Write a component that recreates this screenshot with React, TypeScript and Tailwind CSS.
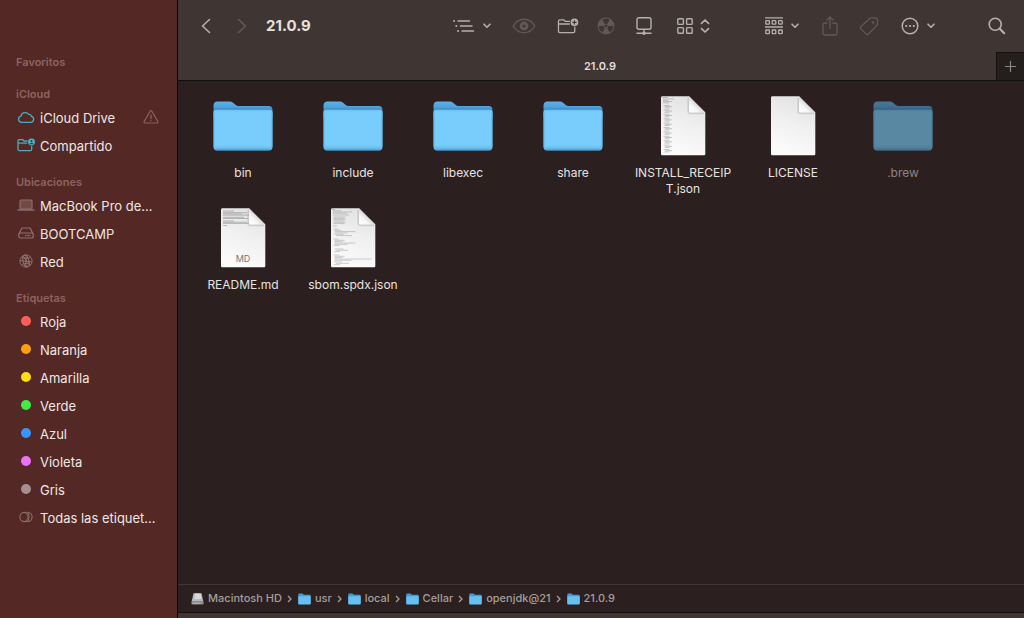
import { useId } from "react";
import type { ReactNode } from "react";

interface Place {
  label: string;
  icon: ReactNode;
  warning?: boolean;
}

const places: { title: string; items: Place[] }[] = [
  {
    title: "Favoritos",
    items: [],
  },
  {
    title: "iCloud",
    items: [
      { label: "iCloud Drive", icon: <CloudIcon />, warning: true },
      { label: "Compartido", icon: <SharedIcon /> },
    ],
  },
  {
    title: "Ubicaciones",
    items: [
      { label: "MacBook Pro de…", icon: <LaptopIcon /> },
      { label: "BOOTCAMP", icon: <DriveIcon /> },
      { label: "Red", icon: <NetworkIcon /> },
    ],
  },
  {
    title: "Etiquetas",
    items: [
      { label: "Roja", icon: <Dot className="bg-[#ff5f57]" /> },
      { label: "Naranja", icon: <Dot className="bg-[#ff9f0f]" /> },
      { label: "Amarilla", icon: <Dot className="bg-[#ffdf14]" /> },
      { label: "Verde", icon: <Dot className="bg-[#41ec45]" /> },
      { label: "Azul", icon: <Dot className="bg-[#3795ff]" /> },
      { label: "Violeta", icon: <Dot className="bg-[#ee70ff]" /> },
      { label: "Gris", icon: <Dot className="bg-[#a68f92]" /> },
      { label: "Todas las etiquet…", icon: <AllTagsIcon /> },
    ],
  },
];

type FileKind = "folder" | "receipt" | "plain" | "markdown" | "json";

const files: { name: string; kind: FileKind; hidden?: boolean }[] = [
  { name: "bin", kind: "folder" },
  { name: "include", kind: "folder" },
  { name: "libexec", kind: "folder" },
  { name: "share", kind: "folder" },
  { name: "INSTALL_RECEIPT.json", kind: "receipt" },
  { name: "LICENSE", kind: "plain" },
  { name: ".brew", kind: "folder", hidden: true },
  { name: "README.md", kind: "markdown" },
  { name: "sbom.spdx.json", kind: "json" },
];

const path = ["Macintosh HD", "usr", "local", "Cellar", "openjdk@21", "21.0.9"];

/* Sidebar icons */

function Dot({ className }: { className: string }) {
  return <span className={`block size-[10px] rounded-full ${className}`} />;
}

function CloudIcon() {
  return (
    <svg width="18" height="14" viewBox="0 0 18 14" fill="none" stroke="#4fa9bf" strokeWidth="1.3">
      <path d="M4.4 12.3h9.2a3 3 0 0 0 .8-5.9 2 2 0 0 0-2.7-1.9A4.2 4.2 0 0 0 4 6.2a3.1 3.1 0 0 0 .4 6.1Z" strokeLinejoin="round" />
    </svg>
  );
}

function SharedIcon() {
  return (
    <svg width="18" height="14" viewBox="0 0 18 14" fill="none" stroke="#4fa9bf" strokeWidth="1.3">
      <path d="M10.5 3H7L5.8 1.7H2.2c-.8 0-1.2.4-1.2 1.2v8.3c0 .9.5 1.4 1.4 1.4h10.9c.9 0 1.4-.5 1.4-1.4V8M1 5.2h9.2" />
      <circle cx="14.5" cy="4" r="3.4" fill="#43b9d5" stroke="none" />
      <circle cx="14.5" cy="3" r="1.1" fill="#532825" stroke="none" />
      <path d="M12.6 6.2c.3-2 3.5-2 3.8 0Z" fill="#532825" stroke="none" />
    </svg>
  );
}

function LaptopIcon() {
  return (
    <svg width="18" height="14" viewBox="0 0 18 14" fill="none" stroke="#8f7170" strokeWidth="1.1">
      <rect x="3" y="2" width="12" height="9" rx="1" fill="#714947" />
      <path d="M.5 12h17" strokeWidth="1.4" />
    </svg>
  );
}

function DriveIcon() {
  return (
    <svg width="18" height="14" viewBox="0 0 18 14" fill="none" stroke="#8f7170" strokeWidth="1.2">
      <path d="M2 8 4.3 3c.3-.7.8-1 1.5-1h6.400c.7 0 1.2.3 1.5 1L16 8" />
      <rect x="1.7" y="7" width="14.6" height="5" rx="2" />
      <path d="M8 9.500h6" strokeWidth="1.5" strokeDasharray="1 .5" />
    </svg>
  );
}

function NetworkIcon() {
  return (
    <svg width="14" height="14" viewBox="0 0 14 14" fill="none" stroke="#8f7170" strokeWidth="1">
      <circle cx="7" cy="7" r="6.1" />
      <ellipse cx="7" cy="7" rx="2.9" ry="6" transform="rotate(-15 7 7)" />
      <path d="M1 6.5 12.5 8M2.6 3.2C5 5 9 5 11.8 3.2M2.5 11c2.5-2 6.5-2 9 0M7 1v12M4 2l7 9" />
    </svg>
  );
}

function AllTagsIcon() {
  return (
    <svg width="14" height="12" viewBox="0 0 14 12" fill="none" stroke="#8f7170" strokeWidth="1.1">
      <circle cx="5.5" cy="6" r="4.6" />
      <path d="M8.5 1.4a4.6 4.6 0 0 1 0 9.2" />
      <path d="M6.9 2.2a4.6 4.6 0 0 1 0 7.6" strokeWidth=".8" />
    </svg>
  );
}

function WarningIcon() {
  return (
    <svg width="16" height="14" viewBox="0 0 16 14" fill="none" stroke="#88605d" strokeWidth="1.2" strokeLinecap="round">
      <path d="M7.1 1.2c.4-.7 1.4-.7 1.8 0l5.9 10.2c.4.7-.1 1.6-.9 1.6H2.1c-.8 0-1.3-.9-.9-1.6Z" />
      <path d="M8 5v3.600M8 10.500v.2" strokeWidth="1.3" />
    </svg>
  );
}

/* Toolbar icons */

function ChevronDown() {
  return (
    <svg width="8" height="6" viewBox="0 0 8 6" fill="none" stroke="currentColor" strokeWidth="1.6" strokeLinecap="round" strokeLinejoin="round">
      <path d="m1 1.2 3 3 3-3" />
    </svg>
  );
}

function ListIcon() {
  return (
    <svg width="22" height="16" viewBox="0 0 22 16" fill="none" stroke="currentColor" strokeWidth="1.4" strokeLinecap="round">
      <path d="M5 3h11.5M7.5 8H19M9 13h11.5" />
      <path d="M1 3h.2M3.2 8h.2M5 13h.2" strokeWidth="1.8" />
    </svg>
  );
}

function EyeIcon() {
  return (
    <svg width="24" height="16" viewBox="0 0 24 16" fill="none" stroke="currentColor" strokeWidth="1.4">
      <path d="M1.2 8C3.5 4 7.5 1.3 12 1.3S20.500 4 22.800 8c-2.300 4-6.300 6.700-10.800 6.700S3.500 12 1.200 8Z" />
      <circle cx="12" cy="8" r="3" strokeWidth="2.8" />
    </svg>
  );
}

function NewFolderIcon() {
  return (
    <svg width="24" height="18" viewBox="0 0 24 18" fill="none" stroke="currentColor" strokeWidth="1.4">
      <path d="M14 4H9L7.5 2.3H3c-.9 0-1.4.5-1.4 1.4v11c0 1 .6 1.6 1.6 1.6h14.600c1 0 1.600-.6 1.600-1.600v-5M1.600 6.800H14" />
      <circle cx="19" cy="5" r="4.200" fill="currentColor" stroke="none" />
      <path d="M19 2.700v4.600M16.700 5h4.600" stroke="#3f3634" strokeWidth="1.2" />
    </svg>
  );
}

function BurnIcon() {
  return (
    <svg width="18" height="18" viewBox="0 0 18 18">
      <circle cx="9" cy="9" r="8.5" fill="currentColor" />
      <g fill="#3f3634">
        {[60, 180, 300].map((angle) => (
          <path
            key={angle}
            d="M7.8 7 5.3 2.7a7.3 7.3 0 0 1 7.4 0L10.200 7a2.300 2.300 0 0 0-2.400 0Z"
            transform={`rotate(${angle + 60} 9 9)`}
          />
        ))}
        <circle cx="9" cy="9" r="1.4" />
      </g>
    </svg>
  );
}

function ServerIcon() {
  return (
    <svg width="18" height="20" viewBox="0 0 18 20" fill="none" stroke="currentColor" strokeWidth="1.4">
      <rect x="2" y="1.7" width="14" height="11.5" rx="2" />
      <path d="M9 13.2V17M1.5 17.2h15" />
      <circle cx="9" cy="17.2" r="1.8" fill="currentColor" stroke="none" />
    </svg>
  );
}

function GridIcon() {
  return (
    <svg width="16" height="16" viewBox="0 0 16 16" fill="none" stroke="currentColor" strokeWidth="1.4">
      <rect x=".8" y=".8" width="5.6" height="5.6" rx=".8" />
      <rect x="9.6" y=".8" width="5.6" height="5.6" rx=".8" />
      <rect x=".8" y="9.6" width="5.6" height="5.6" rx=".8" />
      <rect x="9.6" y="9.6" width="5.6" height="5.6" rx=".8" />
    </svg>
  );
}

function UpDownIcon() {
  return (
    <svg width="10" height="14" viewBox="0 0 10 14" fill="none" stroke="currentColor" strokeWidth="1.7" strokeLinecap="round" strokeLinejoin="round">
      <path d="M1.500 4.300 5 1l3.500 3.300M1.500 9.700 5 13l3.500-3.300" />
    </svg>
  );
}

function GroupIcon() {
  return (
    <svg width="18" height="18" viewBox="0 0 18 18" fill="none" stroke="currentColor" strokeWidth="1.3">
      <path d="M0 .8h18M0 10h18" />
      <rect x=".8" y="3.6" width="3.6" height="3.6" rx=".6" />
      <rect x="7.2" y="3.6" width="3.6" height="3.6" rx=".6" />
      <rect x="13.6" y="3.6" width="3.6" height="3.6" rx=".6" />
      <rect x=".8" y="13" width="3.6" height="3.6" rx=".6" />
      <rect x="7.2" y="13" width="3.6" height="3.6" rx=".6" />
      <rect x="13.6" y="13" width="3.6" height="3.6" rx=".6" />
    </svg>
  );
}

function ShareIcon() {
  return (
    <svg width="16" height="20" viewBox="0 0 16 20" fill="none" stroke="currentColor" strokeWidth="1.3" strokeLinecap="round" strokeLinejoin="round">
      <path d="M5 7H2.8C1.6 7 1 7.600 1 8.800v8.400c0 1.200.6 1.800 1.800 1.800h10.400c1.200 0 1.800-.6 1.800-1.800V8.800C15 7.600 14.400 7 13.200 7H11M8 12.500V1.200M5 4l3-3 3 3" />
    </svg>
  );
}

function TagIcon() {
  return (
    <svg width="20" height="20" viewBox="0 0 20 20" fill="none" stroke="currentColor" strokeWidth="1.3" strokeLinejoin="round">
      <path d="M10.8 2.5c.5-.5 1-.7 1.7-.7h3.700c1.500 0 2.300.8 2.300 2.300v3.700c0 .7-.2 1.200-.7 1.700l-8.300 8.400c-.8.8-1.700.8-2.500 0L2 13.100c-.8-.8-.8-1.700 0-2.500Z" />
      <circle cx="14" cy="6.500" r="1.3" fill="currentColor" stroke="none" />
    </svg>
  );
}

function MoreIcon() {
  return (
    <svg width="18" height="18" viewBox="0 0 18 18" fill="none" stroke="currentColor" strokeWidth="1.5" strokeLinecap="round">
      <circle cx="9" cy="9" r="7.8" />
      <path d="M5.2 9h.1M9 9h.1M12.8 9h.1" strokeWidth="2.2" />
    </svg>
  );
}

function SearchIcon() {
  return (
    <svg width="18" height="18" viewBox="0 0 18 18" fill="none" stroke="currentColor" strokeWidth="1.6" strokeLinecap="round">
      <circle cx="7.2" cy="7.2" r="6" />
      <path d="m11.800 11.800 4.400 4.400" strokeWidth="2.2" />
    </svg>
  );
}

function ArrowIcon({ flip }: { flip?: boolean }) {
  return (
    <svg width="10" height="16" viewBox="0 0 10 16" fill="none" stroke="currentColor" strokeWidth="1.6" strokeLinecap="round" strokeLinejoin="round">
      <path d={flip ? "m1.500 1.500 7 6.500-7 6.500" : "M8.500 1.500 1.500 8l7 6.500"} />
    </svg>
  );
}

/* File icons */

function FolderIcon({ hidden }: { hidden?: boolean }) {
  const id = useId();
  return (
    <svg width="64" height="64" viewBox="0 0 64 64" className={hidden ? "opacity-60" : ""}>
      <defs>
        <linearGradient id={`${id}back`} x1="0" y1="0" x2="0" y2="1">
          <stop offset="0" stopColor="#5db1e6" />
          <stop offset="0.3" stopColor="#52a5dc" />
          <stop offset="0.5" stopColor="#3d8cc8" />
        </linearGradient>
        <linearGradient id={`${id}front`} x1="0" y1="0" x2="0" y2="1">
          <stop offset="0" stopColor="#6ec0f0" />
          <stop offset="0.06" stopColor="#78cdfc" />
          <stop offset="0.86" stopColor="#78cdfc" />
          <stop offset="0.94" stopColor="#69bbe9" />
          <stop offset="1" stopColor="#468fc0" />
        </linearGradient>
      </defs>
      <path d="M2.500 12c0-3 1.200-4.500 4-4.500h11.800c1.700 0 2.600.3 3.800 1.300l2.700 2.200c1 .8 1.700 1 3 1h30c2.500 0 3.700 1.500 3.700 4v8h-59Z" fill={`url(#${id}back)`} />
      <path d="M2.500 18.500c0-2 .8-2.800 2.800-2.800h53.400c2 0 2.800.8 2.800 2.800v34.300c0 2.500-1.300 4-3.800 4H6.300c-2.500 0-3.800-1.500-3.800-4Z" fill={`url(#${id}front)`} />
      <path d="M3 18v35M61 18v35" stroke="#5aaade" strokeWidth=".8" />
    </svg>
  );
}

function textLines(kind: FileKind) {
  if (kind === "receipt") {
    const rows = Array.from({ length: 11 }, (_, i) => 11.5 + i * 4.4);
    return (
      <g stroke="#8d8d8d" strokeWidth=".6" opacity=".8">
        <path d="M11 3.500h6M12 5h11M12 6.300h5M12 7.600h9M12 8.900h6" />
        {rows.map((y) => (
          <path key={y} d={`M12.5 ${y}h6M14 ${y + 1.2}h7M13.5 ${y + 2.4}h5`} />
        ))}
      </g>
    );
  }
  if (kind === "markdown") {
    return (
      <g stroke="#777777" strokeWidth=".6" opacity=".8">
        <path d="M12 5h11M12 6.700h24M12 7.900h19M12 9.100h26M12 11.300h21M12 12.500h25M12 15h11M12 16.200h24M12 17.400h26M12 19.500h4" />
      </g>
    );
  }
  if (kind === "json") {
    return (
      <g stroke="#777777" strokeWidth=".5" opacity=".7">
        <path d="M11 3.500h3M12 4.700h8M12 6h19M12 7.200h14M12 9h16" />
        <path d="M12.500 11h12M12.500 12.300h11M12.500 13.600h12M12.500 15h10M12.500 16.300h12M12.500 17.600h11M12 20h4" />
        <path d="M12.500 23h5M13.500 24.300h7M13.500 25.600h21M13.500 27h13M13.500 28.300h9M15 29.600h16" />
        <path d="M12.500 33h5M13.500 34.300h10M13.500 35.600h8M13.500 37h21M13.500 38.300h13M12.500 39.600h6M13.500 43h9M15 44.300h12M13 45.600h6" />
        <path d="M12.500 49h6M13.500 50.300h10M13.500 51.600h8M13.500 53h37M13.500 54.300h17M13 56h8M15 57.300h13M13 58.600h6" />
      </g>
    );
  }
  return null;
}

function DocumentIcon({ kind }: { kind: FileKind }) {
  const id = useId();
  return (
    <svg width="64" height="64" viewBox="0 0 64 64">
      <defs>
        <linearGradient id={`${id}page`} x1="0.8" y1="0" x2="0.5" y2="1">
          <stop offset="0" stopColor="#e0e0e0" />
          <stop offset="0.5" stopColor="#f0f0f0" />
          <stop offset="1" stopColor="#fbfbfb" />
        </linearGradient>
        <linearGradient id={`${id}fold`} x1="0" y1="1" x2="0.5" y2="0.5">
          <stop offset="0" stopColor="#ffffff" />
          <stop offset="0.6" stopColor="#f6f6f6" />
          <stop offset="1" stopColor="#d8d8d8" />
        </linearGradient>
      </defs>
      <path d="M11.500 2.200H38L54.300 18.500v41.300c0 1-.5 1.500-1.500 1.500H11.500c-1 0-1.500-.5-1.500-1.500V3.700c0-1 .5-1.500 1.500-1.500Z" fill={`url(#${id}page)`} />
      {textLines(kind)}
      <path d="M37.500 4v13.300c0 1.200.5 1.700 1.700 1.700H53" fill="none" stroke="#999999" strokeWidth="3" opacity=".15" />
      <path d="M37.500 4v13.300c0 1.200.5 1.700 1.700 1.700H53" fill="none" stroke="#999999" strokeWidth="1.4" opacity=".25" />
      <path d="M38 2.200v14.800c0 1 .5 1.500 1.500 1.500h14.800Z" fill={`url(#${id}fold)`} />
      {kind === "markdown" && (
        <text x="32" y="56" textAnchor="middle" fontSize="9" fill="#777777">
          MD
        </text>
      )}
    </svg>
  );
}

function SmallFolder() {
  return (
    <svg width="13" height="12" viewBox="0 0 13 12">
      <path d="M.3 1.500c0-.6.3-1 .9-1h3.200L6 1.800h5.800c.6 0 .9.3.9.9v7.800H.3Z" fill="#439ad3" />
      <path d="M.3 3.200h12.400v7.300c0 .7-.3 1-1 1H1.300c-.7 0-1-.3-1-1Z" fill="#66bff0" />
    </svg>
  );
}

function SmallDisk() {
  return (
    <svg width="13" height="12" viewBox="0 0 13 12">
      <path d="M2.500.3h8l1.800 8.200H.7Z" fill="#b6b9ba" />
      <path d="M4 .5h5.500l.8 5.500H3.500Z" fill="#d5d9da" />
      <rect x=".4" y="8" width="12.200" height="3.600" rx=".8" fill="#8a8c8d" />
      <path d="M1.500 10.200h8" stroke="#c9cccd" strokeWidth=".8" />
    </svg>
  );
}

interface ToolButtonProps {
  label: string;
  className: string;
  disabled?: boolean;
  children: ReactNode;
}

function ToolButton({ label, className, disabled, children }: ToolButtonProps) {
  return (
    <button
      type="button"
      aria-label={label}
      disabled={disabled}
      className={`flex h-7 shrink-0 items-center justify-center text-[#b7afac] disabled:text-[#625956] ${className}`}
    >
      {children}
    </button>
  );
}

function Sidebar() {
  return (
    <nav className="w-[178px] shrink-0 border-r border-black bg-[#532825] pt-[39px]">
      {places.map((section) => (
        <section key={section.title}>
          <h2 className="h-8 px-4 pt-[14px] text-[11px] leading-[18px] font-semibold text-[#8c6360]">{section.title}</h2>
          <ul>
            {section.items.map((item) => (
              <li key={item.label}>
                <a href="#" className="flex h-7 items-center pr-[18px] pl-4 text-[13px] leading-5 text-[#f0e6e4]">
                  <span className="mr-1 flex w-5 shrink-0 justify-center">{item.icon}</span>
                  <span className="flex-1 pt-px whitespace-nowrap">{item.label}</span>
                  {item.warning && <WarningIcon />}
                </a>
              </li>
            ))}
          </ul>
        </section>
      ))}
    </nav>
  );
}

function Toolbar() {
  return (
    <div className="flex h-[52px] items-center gap-12 pr-[18px] pl-[23px]">
      <div className="flex flex-1 items-center">
        <ToolButton label="Atrás" className="w-[10px]">
          <ArrowIcon />
        </ToolButton>
        <ToolButton label="Adelante" className="ml-[26px] w-[10px]" disabled>
          <ArrowIcon flip />
        </ToolButton>
        <h1 className="ml-[19px] text-[15px] font-bold text-[#e6e1df]">21.0.9</h1>
      </div>
      <div className="flex items-center gap-4">
        <ToolButton label="Visualización" className="w-[38px] gap-2">
          <ListIcon />
          <ChevronDown />
        </ToolButton>
        <ToolButton label="Vista rápida" className="w-[34px]" disabled>
          <EyeIcon />
        </ToolButton>
        <ToolButton label="Nueva carpeta" className="w-[22px]">
          <NewFolderIcon />
        </ToolButton>
        <ToolButton label="Grabar" className="w-[22px]" disabled>
          <BurnIcon />
        </ToolButton>
        <ToolButton label="Conectar" className="w-[22px]">
          <ServerIcon />
        </ToolButton>
        <ToolButton label="Iconos" className="w-[44px] gap-[7px]">
          <GridIcon />
          <UpDownIcon />
        </ToolButton>
      </div>
      <div className="flex items-center gap-4">
        <ToolButton label="Agrupar" className="w-[38px] gap-2">
          <GroupIcon />
          <ChevronDown />
        </ToolButton>
        <ToolButton label="Compartir" className="w-[25px]" disabled>
          <ShareIcon />
        </ToolButton>
        <ToolButton label="Editar etiquetas" className="w-[22px]" disabled>
          <TagIcon />
        </ToolButton>
        <ToolButton label="Acción" className="w-[44px] gap-2">
          <MoreIcon />
          <ChevronDown />
        </ToolButton>
      </div>
      <ToolButton label="Buscar" className="w-[18px]">
        <SearchIcon />
      </ToolButton>
    </div>
  );
}

export default function App() {
  return (
    <div className="flex min-h-screen bg-[#2b201f] font-['Inter','Liberation_Sans',sans-serif]">
      <Sidebar />
      <main className="flex min-w-0 flex-1 flex-col">
        <header className="border-b border-[#151010] bg-[#3f3634]">
          <Toolbar />
          <div className="flex h-7">
            <button type="button" className="flex-1 pl-[26px] text-[11px] font-semibold text-[#e2dcda]">
              21.0.9
            </button>
            <button
              type="button"
              aria-label="Nueva pestaña"
              className="flex w-7 items-center justify-center border-t border-l border-[#151010] bg-[#241e1d] text-[#8a8583]"
            >
              <svg width="11" height="11" viewBox="0 0 11 11" stroke="currentColor" strokeWidth="1.2">
                <path d="M5.500 0v11M0 5.500h11" />
              </svg>
            </button>
          </div>
        </header>

        {/* Folder contents */}
        <ul className="flex flex-1 flex-wrap content-start pt-[13px] pl-[10px]">
          {files.map((file) => (
            <li key={file.name} className="flex h-28 w-[110px] flex-col items-center gap-[7px]">
              {file.kind === "folder" ? <FolderIcon hidden={file.hidden} /> : <DocumentIcon kind={file.kind} />}
              <span
                className={`w-[100px] text-center text-[12px] leading-4 break-all ${file.hidden ? "text-[#8b8482]" : "text-[#e8e3e1]"}`}
              >
                {file.name}
              </span>
            </li>
          ))}
        </ul>

        {/* Path bar */}
        <footer className="border-t border-[#413735]">
          <ol className="flex h-[27px] items-center pl-[13px] text-[11px] font-medium text-[#a59d9b]">
            {path.map((name, i) => (
              <li key={name} className="flex items-center">
                {i === 0 ? <SmallDisk /> : <SmallFolder />}
                <span className="ml-1">{name}</span>
                {i < path.length - 1 && (
                  <svg width="5" height="8" viewBox="0 0 5 8" fill="none" stroke="currentColor" strokeWidth="1.3" className="mr-[6px] ml-[5px]">
                    <path d="m1 1 3 3-3 3" />
                  </svg>
                )}
              </li>
            ))}
          </ol>
          <div className="h-[6px] border-t border-[#151010] bg-[#3f3634]" />
        </footer>
      </main>
    </div>
  );
}
